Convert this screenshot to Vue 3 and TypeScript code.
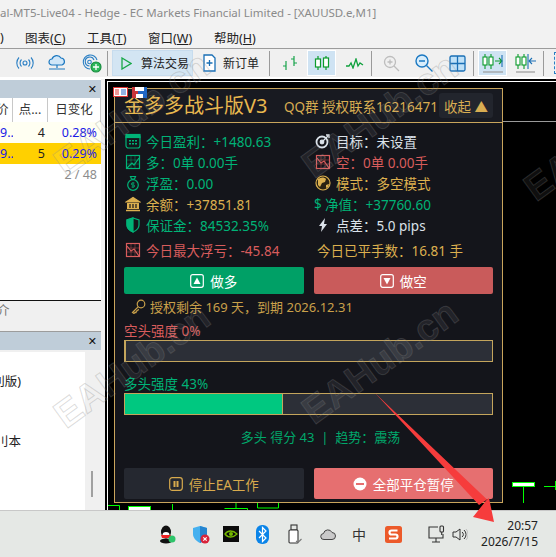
<template>
  <div class="app">
    <div class="titlebar">al-MT5-Live04 - Hedge - EC Markets Financial Limited - [XAUUSD.e,M1]</div>

    <nav class="menubar">
      <span class="menu-cut">)</span>
      <span v-for="m in menus" :key="m.label" class="menu-item" :style="{ width: m.width + 'px' }">{{ m.label }}(<u>{{ m.key }}</u>)</span>
    </nav>

    <div class="toolbar">
      <svg class="tool first" width="18" height="14" viewBox="0 0 18 14" fill="none" stroke="#2a7fc4" stroke-width="1.1"><circle cx="9" cy="7" r="2" /><path d="M5.5 3.5a5 5 0 0 0 0 7M12.5 3.5a5 5 0 0 1 0 7M3 1.5a8 8 0 0 0 0 11M15 1.5a8 8 0 0 1 0 11" /></svg>
      <svg class="tool" width="18" height="18" viewBox="0 0 18 18" fill="#cfe6f8" stroke="#1c78c0" stroke-width="1.2"><path d="M4 11a3 3 0 0 1 0-6 5 5 0 0 1 9-1 3.600 3.600 0 0 1 1 7z" /><path d="M9 11v3M1 15h16" fill="none" /></svg>
      <svg class="tool" width="21" height="20" viewBox="0 0 21 20" fill="none" stroke="#2a7fc4" stroke-width="1.1"><path d="M9 16a7 7 0 1 1 7-9M8.500 13a4.500 4.500 0 1 1 4.500-6" /><circle cx="8.500" cy="9" r="1.800" /><circle cx="15" cy="14" r="5" fill="#2fb85a" stroke="#128a3c" /><path d="M15 11v6M12 14h6" stroke="#fff" stroke-width="1.300" /></svg>
      <i class="sep s1"></i>
      <div class="tool-btn active algo">
        <svg width="11" height="13" viewBox="0 0 11 13" fill="none" stroke="#18a848" stroke-width="1.300"><path d="M1 1l9 5.500-9 5.500z" /></svg>
        <span>算法交易</span>
      </div>
      <div class="tool-btn order">
        <svg width="13" height="18" viewBox="0 0 13 18" fill="#fff" stroke="#1a6fb5" stroke-width="1.300"><path d="M1 1h8l3 3v13H1z" /><path d="M6.500 6v6M3.500 9h6" /></svg>
        <span>新订单</span>
      </div>
      <i class="sep s2"></i>
      <svg class="tool bars" width="16" height="16" viewBox="0 0 16 16" fill="none" stroke="#16a34a" stroke-width="1.200"><path d="M4 6v9M1 11h3M12 1v10M9 4h3M12 8h3" /></svg>
      <div class="chart-mode">
        <svg width="16" height="16" viewBox="0 0 16 16" fill="#fff" stroke="#0c9c2c" stroke-width="1.200"><path d="M4 1v14M12 1v14" /><rect x="1.500" y="4" width="5" height="8" /><rect x="9.500" y="3" width="5" height="9" /></svg>
      </div>
      <svg class="tool line" width="18" height="11" viewBox="0 0 18 11" fill="none" stroke="#0ea03c" stroke-width="1.300"><path d="M0 8h3l2-3 2 5 3-9 2 7 2-3 3 2" /></svg>
      <i class="sep s3"></i>
      <svg class="tool zoom1" width="17" height="17" viewBox="0 0 17 17" fill="none" stroke="#bdbdbd" stroke-width="1.300"><circle cx="7" cy="7" r="5.500" /><path d="M11 11l5 5M4.500 7h5M7 4.500v5" /></svg>
      <svg class="tool zoom2" width="18" height="18" viewBox="0 0 18 18" fill="#d8edfb" stroke="#1a78c2" stroke-width="1.400"><circle cx="7" cy="7" r="6" /><path d="M11.500 11.500l6 6M4 7h6" fill="none" /></svg>
      <svg class="tool grid" width="17" height="17" viewBox="0 0 17 17" fill="#bfe1f8" stroke="#1a6fb5" stroke-width="1.300"><rect x="1" y="1" width="15" height="15" rx="1.500" /><path d="M8.500 1v15M1 8.500h15" /></svg>
      <i class="sep s4"></i>
      <div class="shift-btn">
        <svg width="22" height="22" viewBox="0 0 22 22" fill="none" stroke="#0c9c2c" stroke-width="1.100"><path d="M3 2v15M9 2v15" /><rect x="1" y="5" width="4" height="8" fill="#fff" /><rect x="7" y="5" width="4" height="8" fill="#fff" /><path d="M13 9h7M17 6l3 3-3 3" /><path d="M20 3v12" stroke="#1a6fb5" /><path d="M1 20h20" stroke="#999" stroke-width="1.200" /></svg>
      </div>
      <svg class="tool scale" width="21" height="22" viewBox="0 0 21 22" fill="none" stroke="#0c9c2c" stroke-width="1.100"><path d="M3 2v15M9 2v15" /><rect x="1" y="5" width="4" height="8" fill="#fff" /><rect x="7" y="5" width="4" height="8" fill="#fff" /><path d="M13 2v15" stroke="#1a6fb5" /><path d="M14 9h7M17 6l-3 3 3 3" stroke="#1a6fb5" /><path d="M1 20h19" stroke="#999" stroke-width="1.200" /></svg>
      <i class="sep s5"></i>
      <i class="dashed"></i>
    </div>

    <main class="workspace">
      <aside class="sidebar">
        <section class="watch">
          <header class="pane-head"><b>✕</b></header>
          <div class="watch-row watch-title">
            <span>价</span><span class="center">点...</span><span class="center">日变化</span>
          </div>
          <div v-for="r in quotes" :key="r.points" class="watch-row" :class="r.cls">
            <span class="blue">9...</span><span class="num">{{ r.points }}</span><span class="blue pct">{{ r.change }}</span>
          </div>
          <div class="count">2 / 48</div>
        </section>
        <div class="nav-tabs"><span>介</span></div>
        <header class="pane-head"><b>✕</b></header>
        <section class="nav-body">
          <div class="nav-list">
            <span class="l1">別版)</span>
            <span class="l2">刂本</span>
          </div>
          <div class="scrolltrack"><i></i></div>
        </section>
      </aside>

      <section class="chart">
        <svg class="candles" width="451" height="431" viewBox="0 0 451 431" fill="none" stroke="#00ff00">
          <path d="M378 42.500h73" stroke="#9a9a9a" />
          <path d="M3 426.500h11.500V431M67.500 425v6M119.500 429.500h23V431M131 424v5M152.500 424v5h21v-5M418.500 408v16M439 407.500h12M450.500 402v9" />
          <rect x="23.500" y="427.500" width="22" height="5" fill="#fff" />
          <rect x="407.500" y="403.500" width="22" height="4" fill="#fff" />
        </svg>

        <div class="mini-icons">
          <svg width="15" height="10" viewBox="0 0 15 10"><rect x=".5" y=".5" width="14" height="9" fill="#fff" stroke="#d33" /><path d="M2 3h4M2 5h4M2 7h4" stroke="#d33" /><path d="M8 3h5M8 5h5M8 7h5" stroke="#2566c8" /></svg>
          <svg width="15" height="11" viewBox="0 0 15 11"><rect width="6" height="11" fill="#c9343a" /><rect x="6" width="9" height="11" fill="#1f66c4" /><rect x="3" width="9" height="4" fill="#fff" /><rect x="4" y="7" width="7" height="4" fill="#fff" /></svg>
        </div>

        <div class="panel">
          <header class="panel-head">
            <h1>金多多战斗版V3</h1>
            <span class="qq">QQ群 授权联系16216471</span>
            <button class="fold">收起 ▲</button>
          </header>

          <div class="stats">
            <div v-for="s in stats" :key="s.text" class="stat" :class="s.cls">
              <svg v-if="s.icon" width="16" height="16" viewBox="0 0 16 16" fill="none" stroke="currentColor" stroke-width="1.200" v-html="icons[s.icon]"></svg>
              <span v-else-if="s.glyph" class="glyph">{{ s.glyph }}</span>
              <span>{{ s.text }}</span>
            </div>
          </div>

          <div class="actions">
            <button class="btn long">
              <svg width="14" height="14" viewBox="0 0 14 14"><rect x=".7" y=".7" width="12.600" height="12.600" rx="2" fill="none" stroke="#fff" stroke-width="1.200" /><path d="M7 3.500l3.500 6.500h-7z" fill="#fff" /></svg>
              做多
            </button>
            <button class="btn short">
              <svg width="14" height="14" viewBox="0 0 14 14"><rect x=".7" y=".7" width="12.600" height="12.600" rx="2" fill="none" stroke="#fff" stroke-width="1.200" /><path d="M7 10.500L3.500 4h7z" fill="#fff" /></svg>
              做空
            </button>
          </div>

          <div class="license">
            <svg width="15" height="15" viewBox="0 0 15 15" fill="none" stroke="#c9a04a" stroke-width="1.200"><circle cx="10" cy="5" r="3.800" /><path d="M7.300 7.700L1.500 13.500l1.500 1 1-1.200 1 .2 .5-1.500 1.300-.5.700-1.500" /></svg>
            <span>授权剩余 169 天，到期 2026.12.31</span>
          </div>

          <div v-for="b in strengths" :key="b.label" class="strength" :class="b.cls">
            <div class="strength-label">{{ b.label }} {{ b.value }}%</div>
            <div class="track"><div class="fill" :style="{ width: b.value + '%' }"></div></div>
          </div>

          <div class="status">多头 得分 43 &nbsp;|&nbsp; 趋势：震荡</div>

          <div class="actions bottom">
            <button class="btn stop">
              <svg width="14" height="14" viewBox="0 0 14 14"><rect x=".7" y=".7" width="12.600" height="12.600" rx="2.500" fill="none" stroke="#d8aa4d" stroke-width="1.200" /><path d="M4.500 4h2v6h-2zM7.500 4h2v6h-2z" fill="#d8aa4d" /></svg>
              停止EA工作
            </button>
            <button class="btn close-all">
              <svg width="14" height="14" viewBox="0 0 14 14"><circle cx="7" cy="7" r="6.500" fill="#fff" /><path d="M3 6h8v2H3z" fill="#e66f70" /></svg>
              全部平仓暂停
            </button>
          </div>
        </div>
      </section>
    </main>

    <footer class="taskbar">
      <svg class="t-icon" style="margin-left:159px" width="17" height="19" viewBox="0 0 17 19"><ellipse cx="7" cy="7" rx="5" ry="6.500" fill="#111" /><ellipse cx="7" cy="10" rx="3.500" ry="3" fill="#fff" /><path d="M2 10h10l-1 3H3z" fill="#e22" /><ellipse cx="7" cy="16" rx="6" ry="2.500" fill="#111" /><circle cx="13" cy="14" r="3.500" fill="#2ec46a" /></svg>
      <svg class="t-icon" style="margin-left:16px" width="19" height="19" viewBox="0 0 19 19"><path d="M1 3l7-2 7 2v6c0 4-3 7-7 9-4-2-7-5-7-9z" fill="#45b0ef" /><path d="M8 1l7 2v6c0 4-3 7-7 9z" fill="#2585d0" /><circle cx="13" cy="14" r="4.500" fill="#d8233a" /><path d="M11.300 12.300l3.400 3.400M14.700 12.300l-3.400 3.400" stroke="#fff" stroke-width="1.200" /></svg>
      <svg class="t-icon" style="margin-left:12px" width="16" height="16" viewBox="0 0 16 16"><rect width="16" height="16" fill="#0b0b0b" /><path d="M2 8c3-4 8-4 12 0-4 4-9 4-12 0z" fill="none" stroke="#76b900" stroke-width="1.300" /><circle cx="8" cy="8" r="2" fill="#76b900" /></svg>
      <svg class="t-icon" style="margin-left:17px" width="13" height="19" viewBox="0 0 13 19"><rect width="13" height="19" rx="6" fill="#0a84e8" /><path d="M3 6l7 7-3.500 3.500v-14L10 6l-7 7" fill="none" stroke="#fff" stroke-width="1.200" /></svg>
      <svg class="t-icon" style="margin-left:19px" width="14" height="20" viewBox="0 0 14 20" fill="none" stroke="#333" stroke-width="1.100"><rect x="3" y="1" width="6" height="5" /><rect x="1" y="6" width="9" height="13" rx="1" fill="#fff" /><path d="M8 17l2 1.500 3.500-3.500" stroke="#777" /></svg>
      <svg class="t-icon" style="margin-left:18px" width="16" height="11" viewBox="0 0 16 11"><path d="M4 10.500a3 3 0 0 1-.5-6 4.500 4.500 0 0 1 8.500-1 3.500 3.500 0 0 1 0 7z" fill="#c9c9c9" stroke="#444" /></svg>
      <span class="ime">中</span>
      <svg class="t-icon" style="margin-left:19px" width="17" height="17" viewBox="0 0 17 17"><rect width="17" height="17" rx="2.500" fill="#ec5a2a" /><path d="M12.500 4.500H6.500a2 2 0 0 0 0 4h4a2 2 0 0 1 0 4H4" fill="none" stroke="#fff" stroke-width="2.200" /></svg>
      <svg class="t-icon" style="margin-left:26px" width="17" height="18" viewBox="0 0 17 18" fill="none" stroke="#333" stroke-width="1.100"><path d="M10 2H1v11h14V9M8 13v4M4 17h8" /><rect x="12" y="1" width="3.500" height="6" rx="1" /><path d="M13.700 7v3" /></svg>
      <svg class="t-icon" style="margin-left:7px" width="16" height="13" viewBox="0 0 16 13" fill="none" stroke="#333" stroke-width="1"><path d="M1 4h3l4-3v11L4 9H1z" /><path d="M10 4a3 3 0 0 1 0 5M12 2a6 6 0 0 1 0 9" /><path d="M14 1a8 8 0 0 1 0 11" stroke="#bbb" /></svg>
      <div class="clock"><span>20:57</span><span>2026/7/15</span></div>
    </footer>

    <span v-for="w in marks" :key="w.x + '-' + w.y" class="watermark" :style="{ left: w.x + 'px', top: w.y + 'px' }">EAHub.cn</span>

    <svg class="arrow" width="556" height="557" viewBox="0 0 556 557">
      <path d="M375 393L487 499.500 473 517 494 522 489 498 487 499.500 479 505z" fill="#f63c3c" />
    </svg>
  </div>
</template>

<script setup lang="ts">
interface Stat {
  text: string
  cls: string
  icon?: string
  glyph?: string
}

const menus = [
  { label: '图表', key: 'C', width: 62 },
  { label: '工具', key: 'T', width: 61 },
  { label: '窗口', key: 'W', width: 66 },
  { label: '帮助', key: 'H', width: 60 }
]

const quotes = [
  { points: 4, change: '0.28%', cls: 'row-a' },
  { points: 5, change: '0.29%', cls: 'row-b' }
]

const icons: Record<string, string> = {
  calendar: '<rect x="1" y="1.500" width="14" height="13.500" rx="2.500"/><rect x="1" y="1.500" width="14" height="3" fill="currentColor"/><path d="M4 7h2v1.500H4zM7 7h2v1.500H7zM10 7h2v1.500h-2zM4 10h2v1.500H4zM7 10h2v1.500H7zM10 10h2v1.500h-2z" fill="currentColor" stroke="none"/>',
  chartUp: '<rect x="1.500" y="1.500" width="13" height="13"/><path d="M1.500 6h13M1.500 10h13M6 1.500v13M10 1.500v13" stroke-width=".4"/><path d="M2 14l5-5 2 2 5-7"/>',
  chartDown: '<rect x="1.500" y="1.500" width="13" height="13"/><path d="M1.500 6h13M1.500 10h13M6 1.500v13M10 1.500v13" stroke-width=".4"/><path d="M2 4l4 5 3-2 5 7"/>',
  bag: '<path d="M5.500 1.500h5L9.500 4h-3z"/><circle cx="8" cy="10" r="5.300"/><path d="M9.500 8H7.300a1 1 0 0 0 0 2h1.400a1 1 0 0 1 0 2H6.500M8 7v6" stroke-width=".8"/>',
  bank: '<path d="M8 1.500L1 6h14z" fill="currentColor"/><path d="M2 7h12v6H2z" fill="currentColor" stroke="none"/><path d="M5 8v4M8 8v4M11 8v4" stroke="#14151b"/><path d="M1 14.500h14" stroke-width="1.500"/>',
  shield: '<path d="M8 1l6 2v5c0 3-2.500 5.500-6 7-3.500-1.500-6-4-6-7V3z"/><path d="M8 1v14c-3.500-1.500-6-4-6-7V3z" fill="currentColor"/>',
  target: '<circle cx="7" cy="9" r="5.500" stroke-width="1.800"/><circle cx="7" cy="9" r="1.800" fill="currentColor"/><path d="M7 9l6-6M11 2h3v3" stroke-width="1.300"/>',
  globe: '<circle cx="8" cy="8" r="7" fill="#2a2212"/><path d="M3 4c3-2 6-2 8 0l-1 3-3 1-2 4-2-2z" fill="currentColor" stroke="none"/><path d="M11 10l3-1-1 3-2 1z" fill="currentColor" stroke="none"/>',
  bolt: '<path d="M10 1L4 9h3l-1 6 6-8H9z" fill="currentColor" stroke="none"/>'
}

const stats: Stat[] = [
  { text: '今日盈利：+1480.63', cls: 'green', icon: 'calendar' },
  { text: '目标：未设置', cls: 'white r1', icon: 'target' },
  { text: '多：0单 0.00手', cls: 'green', icon: 'chartUp' },
  { text: '空：0单 0.00手', cls: 'red r1', icon: 'chartDown' },
  { text: '浮盈：0.00', cls: 'green', icon: 'bag' },
  { text: '模式：多空模式', cls: 'gold r1', icon: 'globe' },
  { text: '余额：+37851.81', cls: 'gold', icon: 'bank' },
  { text: '净值：+37760.60', cls: 'green r2', glyph: '$' },
  { text: '保证金：84532.35%', cls: 'green', icon: 'shield' },
  { text: '点差：5.0 pips', cls: 'white r1', icon: 'bolt' },
  { text: '今日最大浮亏：-45.84', cls: 'red last', icon: 'chartDown' },
  { text: '今日已平手数：16.81 手', cls: 'gold last r3' }
]

const strengths = [
  { label: '空头强度', value: 0, cls: 'bear' },
  { label: '多头强度', value: 43, cls: 'bull' }
]

const marks = [
  { x: 46, y: 150 },
  { x: 46, y: 402 },
  { x: 294, y: 152 },
  { x: 294, y: 398 },
  { x: 516, y: 175 }
]
</script>

<style>
html,
body {
  margin: 0;
  background: #f0f0f0;
}
</style>

<style scoped>
.app {
  position: relative;
  width: 556px;
  height: 557px;
  overflow: hidden;
  display: flex;
  flex-direction: column;
  font-family: "Noto Sans", "Noto Sans CJK SC", sans-serif;
  color: #222;
}

.titlebar {
  height: 27px;
  line-height: 26px;
  font-size: 11.5px;
  white-space: nowrap;
  background: #f2f2f2;
  color: #8a8a8a;
}

.menubar {
  height: 21px;
  display: flex;
  align-items: center;
  background: #f2f2f2;
  border-bottom: 1px solid #9c9c9c;
  font-size: 12.5px;
  white-space: nowrap;
}

.menu-cut {
  width: 25px;
}

.menu-item {
  display: block;
}

.toolbar {
  height: 28px;
  display: flex;
  align-items: center;
  background: #f0f0f0;
  border-bottom: 2px solid #fff;
  font-size: 12px;
  white-space: nowrap;
}

.tool {
  flex: none;
}

.first {
  margin-left: 16px;
}

.tool:nth-child(2) {
  margin-left: 14px;
}

.tool:nth-child(3) {
  margin-left: 15px;
}

.sep {
  flex: none;
  width: 1px;
  height: 25px;
  background: #9a9a9a;
}

.s1 { margin: 0 4px 0 5px; }
.s2 { margin: 0 12px 0 10px; }
.s3 { margin: 0 11px 0 7px; }
.s4 { margin: 0 4px 0 7px; }
.s5 { margin: 0 10px 0 7px; }

.tool-btn {
  height: 26px;
  flex: none;
  display: flex;
  align-items: center;
}

.tool-btn.active {
  background: #d3e5f3;
  box-shadow: inset 0 0 0 1px #c7dcee;
}

.algo {
  width: 81px;
  padding-left: 9px;
  box-sizing: border-box;
  gap: 9px;
}

.order {
  margin-left: 10px;
  gap: 7px;
}

.bars { margin-right: 9px; }

.chart-mode,
.shift-btn {
  flex: none;
  width: 29px;
  height: 26px;
  display: flex;
  align-items: center;
  justify-content: center;
  background: #cfe3f3;
  box-shadow: inset 0 0 0 1px #fff;
}

.line { margin-left: 10px; }
.zoom2 { margin-left: 15px; }
.grid { margin-left: 16px; }
.scale { margin-left: 8px; }

.dashed {
  flex: none;
  width: 8px;
  height: 22px;
  border: 1px dashed #2a7fc4;
  box-sizing: border-box;
}

.workspace {
  height: 431px;
  display: flex;
  background: #f0f0f0;
}

.sidebar {
  width: 101px;
  flex: none;
  display: flex;
  flex-direction: column;
  overflow: hidden;
}

.watch {
  height: 222px;
  flex: none;
  background: #fff;
  border-bottom: 1px solid #111;
  padding-top: 1px;
  box-sizing: border-box;
}

.pane-head {
  height: 18px;
  background: #bfcdd9;
  display: flex;
  align-items: center;
  justify-content: flex-end;
  padding-right: 4px;
  flex: none;
}

.pane-head b {
  font: 700 11px "DejaVu Sans", sans-serif;
  color: #111;
}

.watch-row {
  height: 21px;
  display: grid;
  grid-template-columns: 13px 35px 53px;
  align-items: center;
  font-size: 12.5px;
  line-height: 21px;
  white-space: nowrap;
}

.watch-title {
  height: 24px;
  line-height: 24px;
  background: #fff;
  color: #333;
}

.watch-title span {
  border-right: 1px solid #c8c8c8;
}

.center {
  text-align: center;
}

.watch-title span:first-child {
  text-indent: -4px;
  overflow: hidden;
}

.row-a { background: #fffff2; }
.row-b { background: #ffd000; }

.blue {
  color: #1a1ae6;
  overflow: hidden;
}

.num {
  text-align: right;
  padding-right: 3px;
}

.pct {
  text-align: right;
  padding-right: 4px;
}

.count {
  text-align: right;
  padding: 2px 4px 0 0;
  font-size: 12.5px;
  color: #8c8c8c;
}

.nav-tabs {
  height: 31px;
  flex: none;
  background: #f0f0f0;
  border-bottom: 1px solid #9c9c9c;
  box-sizing: border-box;
  font-size: 12.5px;
  color: #777;
  line-height: 20px;
  text-indent: -3px;
}

.nav-body {
  flex: 1;
  display: flex;
  padding-top: 2px;
}

.nav-list {
  width: 85px;
  background: #fff;
  overflow: hidden;
  font-size: 12.5px;
  display: flex;
  flex-direction: column;
  align-items: flex-end;
  padding-right: 64px;
  box-sizing: border-box;
  padding-top: 19px;
  gap: 41px;
  white-space: nowrap;
}

.scrolltrack {
  flex: 1;
  display: flex;
  justify-content: center;
  align-items: flex-end;
  padding: 0 2px 13px 0;
}

.scrolltrack i {
  display: block;
  width: 2px;
  height: 26px;
  background: #a0a0a0;
}

.chart {
  position: relative;
  flex: 1;
  margin-left: 4px;
  background: #000;
  border: 2px solid #000;
  border-right: 0;
  border-bottom: 0;
  box-shadow: inset 1px 1px 0 #fff;
  box-sizing: border-box;
}

.candles {
  position: absolute;
  left: -2px;
  top: -2px;
}

.mini-icons {
  position: absolute;
  z-index: 2;
  left: 6px;
  top: 6px;
  display: flex;
  gap: 4px;
  align-items: flex-start;
}

.panel {
  position: absolute;
  left: 7px;
  top: 7px;
  width: 389px;
  height: 415px;
  box-sizing: border-box;
  border: 1px solid #c9a55c;
  background: #14151b;
  display: flex;
  flex-direction: column;
  font-size: 14px;
}

.panel-head {
  height: 34px;
  flex: none;
  box-sizing: border-box;
  border-bottom: 1px solid #c9a55c;
  background: #181a21;
  display: flex;
  align-items: center;
  padding: 0 9px;
  color: #d8ad52;
}

.panel-head h1 {
  margin: 0;
  width: 160px;
  font-size: 20px;
  line-height: 30px;
  font-weight: 400;
  color: #e8b84f;
  white-space: nowrap;
}

.qq {
  font-size: 13.5px;
  white-space: nowrap;
  width: 155px;
}

.fold {
  width: 54px;
  height: 25px;
  padding: 0;
  border: 0;
  border-radius: 3px;
  background: #22252d;
  color: #d8ad52;
  font: 13.5px "Noto Sans", "Noto Sans CJK SC", sans-serif;
  white-space: nowrap;
}

.stats {
  display: grid;
  grid-template-columns: 181px 1fr;
  grid-auto-rows: 21px;
  padding: 7px 0 0 10px;
  flex: none;
}

.stat {
  display: flex;
  align-items: center;
  gap: 5px;
  white-space: nowrap;
  font-size: 13.5px;
}

.stat.last {
  height: 21px;
  margin-top: 4px;
}

.r1 { padding-left: 9px; }
.r2 { padding-left: 8px; }
.r3 { padding-left: 11px; }

.glyph {
  width: 8px;
  margin-right: -2px;
}

.green { color: #00b377; }
.red { color: #d85c5c; }
.gold { color: #dcb04f; }
.white { color: #dbe2ea; }

.actions {
  display: grid;
  grid-template-columns: 1fr 1fr;
  gap: 10px;
  padding: 0 9px;
  margin-top: 11px;
  flex: none;
}

.btn {
  height: 27px;
  border: 0;
  padding: 0;
  border-radius: 2px;
  color: #fff;
  display: flex;
  align-items: center;
  justify-content: center;
  gap: 6px;
  font: 13.5px "Noto Sans", "Noto Sans CJK SC", sans-serif;
}

.long { background: #00a066; }
.short { background: #c95b5b; }

.license {
  height: 24px;
  display: flex;
  align-items: center;
  gap: 4px;
  padding-left: 16px;
  font-size: 13px;
  color: #c9a04a;
  white-space: nowrap;
}

.strength {
  padding: 0 9px;
  flex: none;
}

.strength-label {
  height: 18px;
  line-height: 18px;
  font-size: 13.5px;
  white-space: nowrap;
}

.bear {
  margin-top: 4px;
}

.bear .strength-label { color: #d85c5c; }

.bull {
  margin-top: 13px;
}

.bull .strength-label { color: #00b377; }

.track {
  height: 22px;
  box-sizing: border-box;
  border: 1px solid #c4a55c;
  background: #2c2f37;
}

.fill {
  height: 100%;
  background: #00c880;
  border-right: 1px solid #c4a55c;
  box-sizing: border-box;
}

.status {
  margin-top: 11px;
  height: 22px;
  line-height: 22px;
  padding-left: 24px;
  text-align: center;
  font-size: 13px;
  color: #00a86b;
  white-space: pre;
}

.bottom {
  margin-top: 20px;
}

.bottom .btn {
  height: 31px;
}

.stop {
  background: #252830;
  color: #d8aa4d !important;
}

.close-all {
  background: #e66f70;
}

.taskbar {
  height: 47px;
  flex: none;
  display: flex;
  align-items: center;
  background: #e5e8e5;
  border-top: 1px solid #c8c8c8;
  box-sizing: border-box;
}

.t-icon {
  flex: none;
}

.ime {
  margin-left: 16px;
  font-size: 14px;
  color: #333;
}

.clock {
  margin-left: auto;
  padding-right: 18px;
  display: flex;
  flex-direction: column;
  align-items: flex-end;
  font-size: 12px;
  line-height: 16px;
  color: #222;
}

.watermark {
  position: absolute;
  transform: rotate(-36deg);
  transform-origin: left top;
  font: 700 38px "Liberation Sans", Arial, sans-serif;
  white-space: nowrap;
  color: rgba(255, 255, 255, 0.08);
  -webkit-text-stroke: 1px rgba(130, 130, 130, 0.28);
  pointer-events: none;
}

.arrow {
  position: absolute;
  left: 0;
  top: 0;
  pointer-events: none;
}
</style>
